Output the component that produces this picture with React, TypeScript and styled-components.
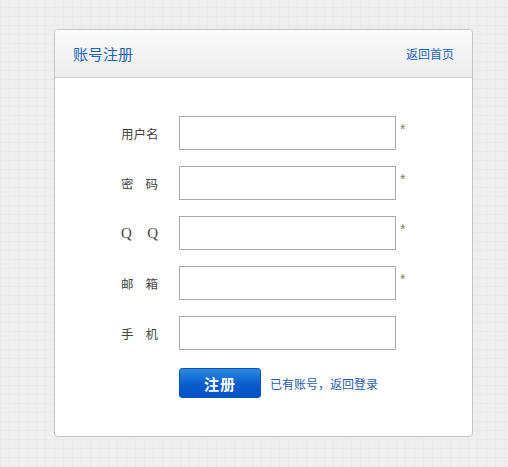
import React from "react";
import styled, { createGlobalStyle } from "styled-components";

const Global = createGlobalStyle`
  html, body {
    margin: 0;
    padding: 0;
  }
  body {
    font-family: "Noto Sans CJK SC", "Liberation Sans", sans-serif;
    background-color: #efefef;
    background-image:
      repeating-linear-gradient(90deg, rgba(0,0,0,0.018) 0px, rgba(0,0,0,0.018) 1px, transparent 1px, transparent 9px),
      repeating-linear-gradient(0deg, rgba(0,0,0,0.018) 0px, rgba(0,0,0,0.018) 1px, transparent 1px, transparent 9px);
    min-height: 467px;
  }
`;

const Page = styled.div`
  padding: 29px 0 0 54px;
`;

const Card = styled.div`
  width: 417px;
  background: #fff;
  border: 1px solid #c6c6c6;
  border-radius: 4px;
  box-shadow: 0 0 2px rgba(0, 0, 0, 0.06);
  overflow: hidden;
`;

const Header = styled.div`
  height: 47px;
  display: flex;
  align-items: center;
  justify-content: space-between;
  padding: 0 18px 0 18px;
  background: linear-gradient(#fbfbfb, #ededed);
  border-bottom: 1px solid #cfcfcf;
`;

const Title = styled.span`
  font-size: 15px;
  color: #2263b8;
`;

const HomeLink = styled.a`
  font-size: 12px;
  color: #2263b8;
  text-decoration: none;
`;

const Body = styled.div`
  padding: 38px 0 38px 66px;
  display: flex;
  flex-direction: column;
  gap: 16px;
`;

const Row = styled.div`
  display: flex;
  align-items: center;
`;

const Label = styled.div`
  width: 37px;
  margin-right: 21px;
  display: flex;
  justify-content: space-between;
  color: #444;
`;

const LabelChar = styled.span<{ $latin?: boolean }>`
  font-family: ${(p) =>
    p.$latin ? '"Liberation Serif", "DejaVu Serif", serif' : '"Noto Sans CJK SC", sans-serif'};
  font-size: ${(p) => (p.$latin ? "15px" : "12.5px")};
`;

const Input = styled.input`
  box-sizing: border-box;
  width: 217px;
  height: 34px;
  border: 1px solid #aaaaaa;
  margin: 0;
  padding: 0 6px;
  outline: none;
  background: #fff;
`;

const Star = styled.span`
  align-self: flex-start;
  margin-left: 4px;
  margin-top: 5px;
  font-size: 14px;
  color: #877b6c;
  font-family: "Liberation Sans", sans-serif;
`;

const Actions = styled.div`
  display: flex;
  align-items: center;
  margin-left: 58px;
  margin-top: 2px;
  gap: 9px;
`;

const Button = styled.button`
  width: 82px;
  height: 30px;
  border: 1px solid #0a55b8;
  border-radius: 3px;
  background: linear-gradient(#2a8ae0, #0a5ccc 55%, #0050c2);
  color: #fff;
  font-family: "Noto Sans CJK SC", sans-serif;
  font-size: 15px;
  font-weight: bold;
  letter-spacing: 1px;
  padding: 0;
  cursor: pointer;
`;

const LoginLink = styled.a`
  font-size: 12px;
  color: #2a5caa;
  text-decoration: none;
`;

type Field = { chars: string[]; latin?: boolean; required: boolean; type?: string };

const fields: Field[] = [
  { chars: ["用", "户", "名"], required: true },
  { chars: ["密", "码"], required: true, type: "password" },
  { chars: ["Q", "Q"], latin: true, required: true },
  { chars: ["邮", "箱"], required: true },
  { chars: ["手", "机"], required: false },
];

export default function App() {
  return (
    <>
      <Global />
      <Page>
        <Card>
          <Header>
            <Title>账号注册</Title>
            <HomeLink href="#">返回首页</HomeLink>
          </Header>
          <Body>
            {fields.map((f, i) => (
              <Row key={i}>
                <Label>
                  {f.chars.map((c, j) => (
                    <LabelChar key={j} $latin={f.latin}>
                      {c}
                    </LabelChar>
                  ))}
                </Label>
                <Input type={f.type || "text"} />
                {f.required && <Star>*</Star>}
              </Row>
            ))}
            <Actions>
              <Button>注册</Button>
              <LoginLink href="#">已有账号，返回登录</LoginLink>
            </Actions>
          </Body>
        </Card>
      </Page>
    </>
  );
}
